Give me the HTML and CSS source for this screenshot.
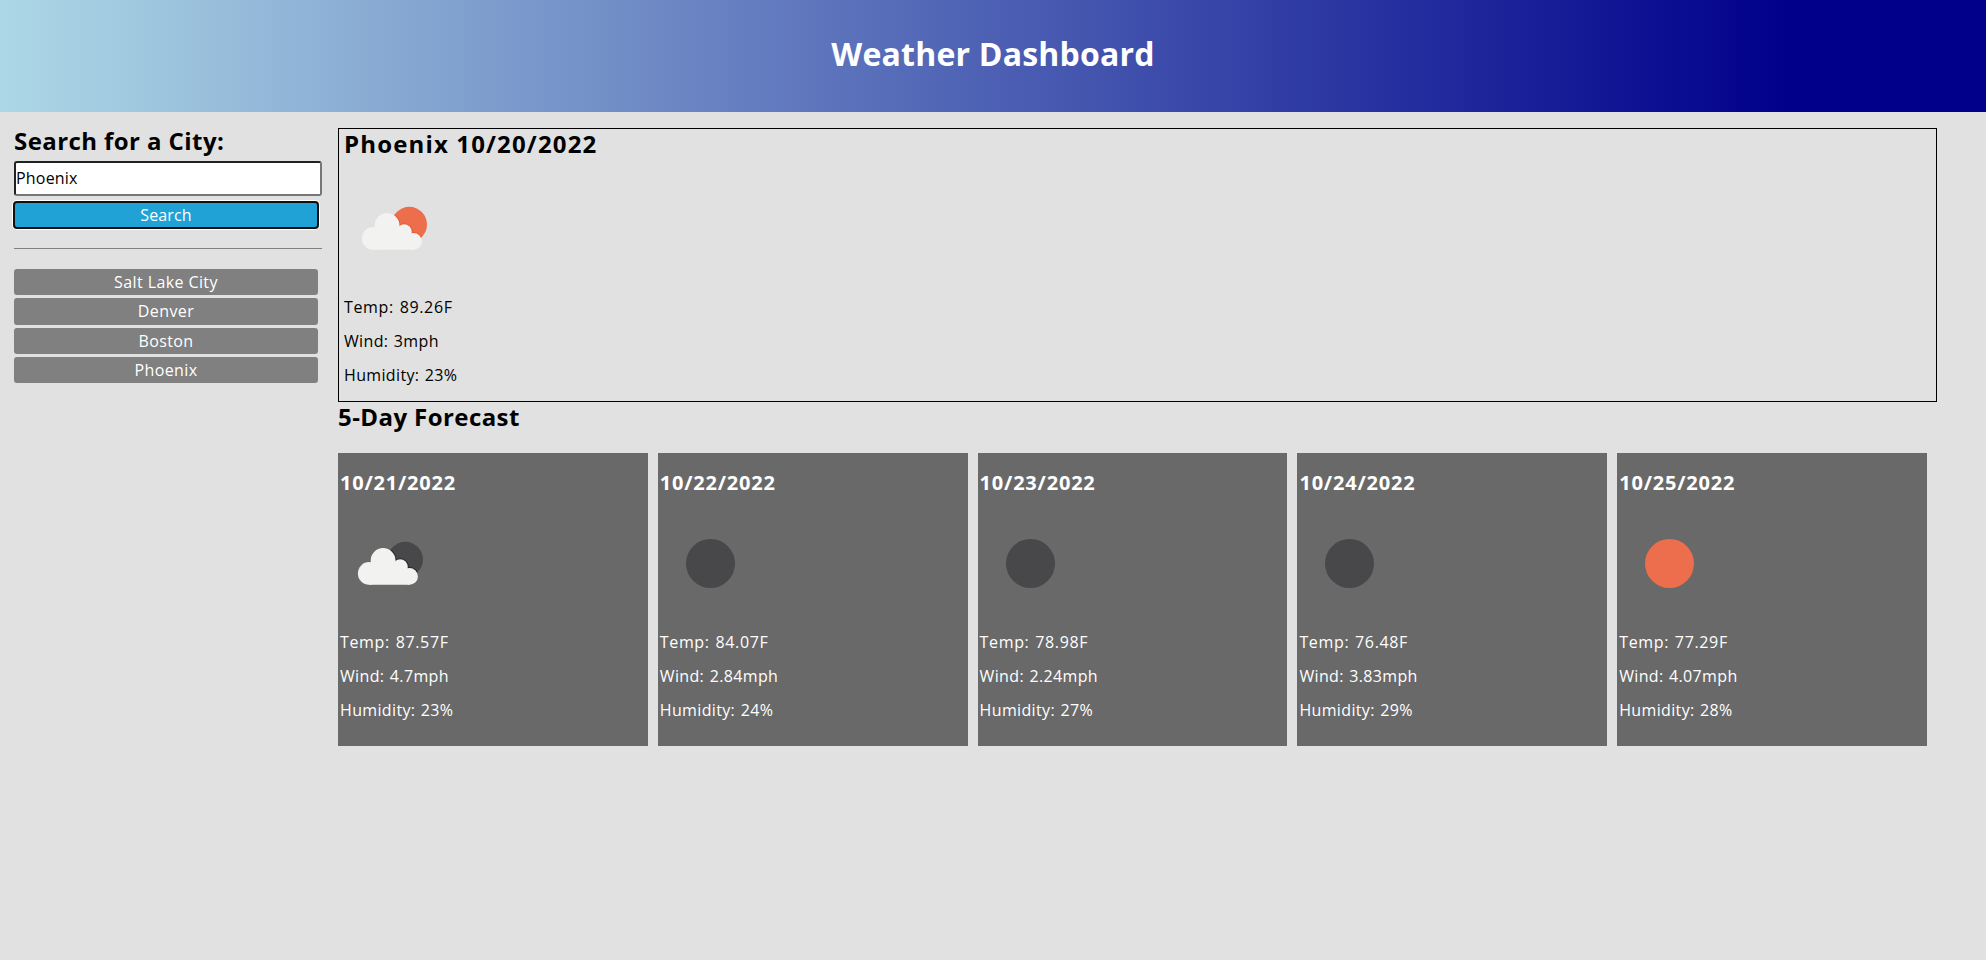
FILE: index.html
```html
<!DOCTYPE html>
<html lang="en">
<head>
<meta charset="utf-8">
<title>Weather Dashboard</title>
<link rel="stylesheet" href="styles.css">
</head>
<body>
<svg class="defs" width="0" height="0">
  <defs>
    <g id="cloud">
      <circle cx="29.2" cy="56.4" r="11.3"/>
      <circle cx="43.1" cy="43.4" r="12.4"/>
      <circle cx="60.2" cy="49.8" r="7.6"/>
      <circle cx="69.5" cy="59.4" r="8.4"/>
      <path d="M29 48h14l18-2 9 8v13.7H29z"/>
    </g>
    <clipPath id="disc"><circle cx="65.3" cy="42.5" r="17.7"/></clipPath>
  </defs>
</svg>
<header class="header"><h1>Weather Dashboard</h1></header>
<div class="layout">
  <aside class="sidebar">
    <h2>Search for a City:</h2>
    <input class="city-input" type="text" value="Phoenix" aria-label="City">
    <button class="btn search">Search</button>
    <hr class="rule">
    <div class="history">
      <button class="btn">Salt Lake City</button>
      <button class="btn">Denver</button>
      <button class="btn">Boston</button>
      <button class="btn">Phoenix</button>
    </div>
  </aside>
  <main class="main">
    <section class="today">
      <h2>Phoenix 10/20/2022</h2>
      <svg class="icon" viewBox="0 0 100 100"><circle class="sun" cx="65.3" cy="42.5" r="17.7"/><g clip-path="url(#disc)"><use class="sun-edge" href="#cloud"/></g><use class="cloud" href="#cloud"/></svg>
      <p class="temp">Temp: 89.26F</p><p>Wind: 3mph</p><p>Humidity: 23%</p>
    </section>
    <h2 class="forecast-title">5-Day Forecast</h2>
    <section class="forecast">
      <article class="card">
        <h3>10/21/2022</h3>
        <svg class="icon" viewBox="0 0 100 100"><circle class="moon" cx="65.3" cy="42.5" r="17.7"/><g clip-path="url(#disc)"><use class="moon-edge" href="#cloud"/></g><use class="cloud" href="#cloud"/></svg>
        <p class="temp">Temp: 87.57F</p><p>Wind: 4.7mph</p><p>Humidity: 23%</p>
      </article>
      <article class="card">
        <h3>10/22/2022</h3>
        <svg class="icon" viewBox="0 0 100 100"><circle class="moon" cx="50.5" cy="46.5" r="24.5"/></svg>
        <p class="temp">Temp: 84.07F</p><p>Wind: 2.84mph</p><p>Humidity: 24%</p>
      </article>
      <article class="card">
        <h3>10/23/2022</h3>
        <svg class="icon" viewBox="0 0 100 100"><circle class="moon" cx="50.5" cy="46.5" r="24.5"/></svg>
        <p class="temp">Temp: 78.98F</p><p>Wind: 2.24mph</p><p>Humidity: 27%</p>
      </article>
      <article class="card">
        <h3>10/24/2022</h3>
        <svg class="icon" viewBox="0 0 100 100"><circle class="moon" cx="50.5" cy="46.5" r="24.5"/></svg>
        <p class="temp">Temp: 76.48F</p><p>Wind: 3.83mph</p><p>Humidity: 29%</p>
      </article>
      <article class="card">
        <h3>10/25/2022</h3>
        <svg class="icon" viewBox="0 0 100 100"><circle class="sun" cx="50.5" cy="46.5" r="24.5"/></svg>
        <p class="temp">Temp: 77.29F</p><p>Wind: 4.07mph</p><p>Humidity: 28%</p>
      </article>
    </section>
  </main>
</div>
</body>
</html>
```
FILE: styles.css
```css
* { box-sizing: border-box; }
body { margin: 0; background: #e1e1e1; color: #000; font: 16px/22px "Open Sans", "Noto Sans", sans-serif; letter-spacing: 0.4px; }
h1, h2, h3, p { margin: 0; }
.defs { position: absolute; }
.header { height: 112px; background: linear-gradient(to right, lightblue, darkblue 90%); color: #fff; text-align: center; }
h1 { padding-top: 32px; font-size: 32px; line-height: 44px; font-weight: 700; letter-spacing: 0.2px; }
h2 { font-size: 24px; line-height: 32px; font-weight: 700; letter-spacing: 0.42px; }
.layout { display: flex; }
.sidebar { width: 322px; padding: 13px 0 0 14px; }
.city-input { display: block; width: 308px; height: 35px; margin-top: 4px; padding: 0 0 1px; border: 2px inset #767676; border-radius: 3px; font: inherit; letter-spacing: 0.2px; background: #fff; color: #000; }
.btn { display: block; width: 304px; height: 26.3px; padding: 0; border: 0; border-radius: 3px; background: #808080; color: #fff; font: inherit; letter-spacing: inherit; text-align: center; }
.search { height: 26px; margin-top: 6px; background: #20a2d6; outline: 2px solid #101010; outline-offset: -1px; box-shadow: 0 0 0 2px #fff; letter-spacing: 0.1px; }
.rule { margin: 20px 0; border: 0; height: 1px; background: #808080; }
.history { display: grid; gap: 3px; }
.main { margin-left: 16px; padding-top: 16px; width: 1599px; }
.today { height: 274px; padding: 0 5px; border: 1px solid #000; }
.today h2 { height: 31px; line-height: 30px; letter-spacing: 1.15px; }
.icon { display: block; width: 100px; height: 100px; }
.today .icon { margin: 22px 0 14px; }
p { height: 22px; margin-bottom: 12px; letter-spacing: 0.35px; word-spacing: 1px; }
.temp { letter-spacing: 0.65px; }
.forecast-title { height: 32px; margin-bottom: 19px; line-height: 30px; }
.forecast { display: grid; grid-template-columns: repeat(5, 1fr); gap: 10px; padding-right: 10px; }
.card { height: 293px; padding: 17px 2px 0; background: #696969; color: #fff; }
h3 { font-size: 20px; line-height: 26px; font-weight: 700; letter-spacing: 0.8px; }
.card .icon { margin: 21px 0 14px; }
.sun { fill: #ec6e4c; }
.moon { fill: #48484a; }
.cloud { fill: #f2f2f0; }
.sun-edge { fill: #ea5a34; stroke: #ea5a34; stroke-width: 2; }
.moon-edge { fill: #252527; stroke: #252527; stroke-width: 2; }
```
